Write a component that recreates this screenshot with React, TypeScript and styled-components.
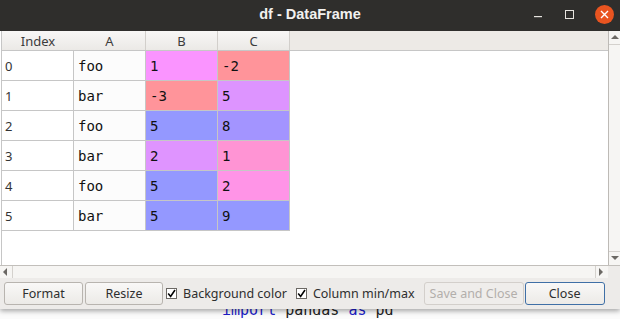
import React from "react"
import styled, { createGlobalStyle } from "styled-components"

const GlobalStyle = createGlobalStyle`
	html, body {
		margin: 0;
		padding: 0;
		width: 620px;
		height: 319px;
		overflow: hidden;
		background: #f4f4f4;
	}
`

const UI_FONT = `"Noto Sans", "Open Sans", "DejaVu Sans", sans-serif`
const MONO_FONT = `"DejaVu Sans Mono", "Liberation Mono", monospace`
const GRID = "#c6c6c6"

const SPage = styled.div`
	display: flex;
	flex-direction: column;
	width: 620px;
	height: 319px;
	overflow: hidden;
	font-family: ${UI_FONT};
`

const SWindow = styled.div`
	position: relative;
	z-index: 1;
	display: flex;
	flex-direction: column;
	height: 309px;
	background: #edebe9;
	box-shadow: 0 2px 5px rgba(0, 0, 0, 0.35);
`

const STitleBar = styled.div`
	display: grid;
	grid-template-columns: 1fr auto 1fr;
	align-items: center;
	height: 31px;
	background: #2f2e2c;
	color: #f2f1ef;
`

const STitle = styled.div`
	font-family: "Liberation Sans", Arial, sans-serif;
	font-weight: bold;
	font-size: 14.5px;
	padding-bottom: 3px;
`

const SControls = styled.div`
	display: flex;
	justify-content: flex-end;
	align-items: center;
	padding-bottom: 3px;
`

const SControl = styled.div<{ $w: number }>`
	display: flex;
	width: ${(p) => p.$w}px;
	justify-content: center;
	align-items: center;
`

const SBody = styled.div`
	display: flex;
	height: 234px;
	background: #ffffff;
`

const STable = styled.div`
	display: flex;
	flex-direction: column;
	flex: 1;
	border-left: 1px solid ${GRID};
	margin-left: 1px;
`

const SHeader = styled.div`
	display: flex;
	height: 19px;
	border-bottom: 1px solid ${GRID};
	background: #edeae6;
`

const SHeadCell = styled.div<{ $sep?: boolean }>`
	display: flex;
	width: ${(p) => (p.$sep ? 71 : 72)}px;
	align-items: center;
	justify-content: center;
	background: linear-gradient(#f8f7f6, #ebe9e6);
	border-right: ${(p) => (p.$sep ? "1px solid #d2cfcb" : "none")};
	font-size: 13px;
	color: #3c3c3c;
`

const SRow = styled.div`
	display: flex;
	height: 30px;
`

const SCell = styled.div<{ $bg?: string; $index?: boolean }>`
	display: flex;
	width: 72px;
	height: 30px;
	box-sizing: border-box;
	align-items: center;
	padding-left: ${(p) => (p.$index ? 3 : 4)}px;
	border-right: 1px solid ${GRID};
	border-bottom: 1px solid ${GRID};
	background: ${(p) => p.$bg || "#fcfcfc"};
	font-family: ${(p) => (p.$index ? UI_FONT : MONO_FONT)};
	font-size: ${(p) => (p.$index ? 13 : 14)}px;
	color: ${(p) => (p.$index ? "#333333" : "#111111")};
`

const SVScroll = styled.div`
	display: flex;
	flex-direction: column;
	justify-content: space-between;
	width: 11px;
	border-left: 1px solid #bdbab6;
	background: #f6f5f3;
`

const SArrowBox = styled.div<{ $top?: boolean }>`
	display: flex;
	height: 13px;
	align-items: center;
	justify-content: center;
	border-${(p) => (p.$top ? "bottom" : "top")}: 1px solid #d4d1cd;
`

const SHScroll = styled.div`
	display: flex;
	height: 12px;
	border-top: 1px solid #c2bfbb;
	background: #f6f5f3;
`

const SHArrow = styled.div<{ $left?: boolean }>`
	display: flex;
	width: 12px;
	align-items: center;
	justify-content: center;
	border-${(p) => (p.$left ? "right" : "left")}: 1px solid #d4d1cd;
`

const SHTrack = styled.div`
	flex: 1;
`

const SCorner = styled.div`
	width: 12px;
	background: #edebe9;
`

const SToolbar = styled.div`
	display: flex;
	align-items: center;
	height: 31px;
	padding: 0 4px;
	background: #edebe9;
`

const SButton = styled.div<{ $w: number; $ml: number; $disabled?: boolean; $default?: boolean }>`
	display: flex;
	flex-shrink: 0;
	width: ${(p) => p.$w}px;
	height: 23px;
	margin-left: ${(p) => p.$ml}px;
	box-sizing: border-box;
	align-items: center;
	justify-content: center;
	border: 1px solid ${(p) => (p.$default ? "#3f6fa6" : p.$disabled ? "#d3cfcb" : "#b8b4af")};
	border-radius: 3px;
	background: ${(p) => (p.$disabled ? "#efedeb" : "linear-gradient(#f9f8f7, #eceae7)")};
	color: ${(p) => (p.$disabled ? "#b3afab" : "#2e2e2e")};
	font-size: 12.5px;
	white-space: nowrap;
`

const SCheck = styled.label<{ $ml: number }>`
	display: flex;
	flex-shrink: 0;
	align-items: center;
	gap: 6px;
	margin-left: ${(p) => p.$ml}px;
	font-size: 12.5px;
	color: #2e2e2e;
	white-space: nowrap;
`

const SBox = styled.div`
	display: flex;
	width: 11px;
	height: 11px;
	box-sizing: border-box;
	border: 1px solid #6b6864;
	background: #ffffff;
	align-items: center;
	justify-content: center;
`

const SCodeStrip = styled.div`
	height: 10px;
	overflow: hidden;
	background: #fbfbfb;
`

const SCodeLine = styled.div`
	margin-top: -8px;
	padding-left: 222px;
	font-family: ${MONO_FONT};
	font-size: 15px;
	line-height: 18px;
	white-space: pre;
	color: #222222;
`

const SKeyword = styled.span`
	color: #1c1cc8;
`

type Row = { idx: string; a: string; b: [string, string]; c: [string, string] }

const rows: Row[] = [
	{ idx: "0", a: "foo", b: ["1", "#fa94ff"], c: ["-2", "#ff949a"] },
	{ idx: "1", a: "bar", b: ["-3", "#ff949a"], c: ["5", "#dd94ff"] },
	{ idx: "2", a: "foo", b: ["5", "#9498ff"], c: ["8", "#a394ff"] },
	{ idx: "3", a: "bar", b: ["2", "#df94ff"], c: ["1", "#ff94d4"] },
	{ idx: "4", a: "foo", b: ["5", "#9498ff"], c: ["2", "#ff94e7"] },
	{ idx: "5", a: "bar", b: ["5", "#9498ff"], c: ["9", "#9498ff"] },
]

const CheckMark = () => (
	<svg width="9" height="9" viewBox="0 0 9 9">
		<path d="M1.2 4.6 L3.6 7.4 L8 1" fill="none" stroke="#000" strokeWidth="1.6" />
	</svg>
)

const Tri = ({ dir }: { dir: "up" | "down" | "left" | "right" }) => {
	const pts = {
		up: "0,5 4,1 8,5",
		down: "0,1 8,1 4,5",
		left: "5,0 5,8 1,4",
		right: "1,0 1,8 5,4",
	}[dir]
	return (
		<svg width="8" height="8" viewBox="0 0 8 8">
			<polygon points={pts} fill="#6b6864" />
		</svg>
	)
}

export default function App() {
	return (
		<SPage>
			<GlobalStyle />
			<SWindow>
				<STitleBar>
					<div />
					<STitle>df - DataFrame</STitle>
					<SControls>
						<SControl $w={22}>
							<svg width="8" height="8" viewBox="0 0 8 8">
								<rect x="0" y="6" width="8" height="1.2" fill="#e6e3de" />
							</svg>
						</SControl>
						<SControl $w={40}>
							<svg width="9" height="9" viewBox="0 0 9 9">
								<rect x="0.5" y="0.5" width="8" height="8" fill="none" stroke="#e6e3de" />
							</svg>
						</SControl>
						<SControl $w={31}>
							<svg width="19" height="19" viewBox="0 0 19 19">
								<circle cx="9.5" cy="9.5" r="9.5" fill="#e95420" />
								<path d="M6 6 L13 13 M13 6 L6 13" stroke="#fff" strokeWidth="1.4" />
							</svg>
						</SControl>
					</SControls>
				</STitleBar>
				<SBody>
					<STable>
						<SHeader>
							<SHeadCell>Index</SHeadCell>
							<SHeadCell $sep>A</SHeadCell>
							<SHeadCell $sep>B</SHeadCell>
							<SHeadCell $sep>C</SHeadCell>
						</SHeader>
						{rows.map((r) => (
							<SRow key={r.idx}>
								<SCell $index $bg="#ffffff">
									{r.idx}
								</SCell>
								<SCell>{r.a}</SCell>
								<SCell $bg={r.b[1]}>{r.b[0]}</SCell>
								<SCell $bg={r.c[1]}>{r.c[0]}</SCell>
							</SRow>
						))}
					</STable>
					<SVScroll>
						<SArrowBox $top>
							<Tri dir="up" />
						</SArrowBox>
						<SArrowBox>
							<Tri dir="down" />
						</SArrowBox>
					</SVScroll>
				</SBody>
				<SHScroll>
					<SHArrow $left>
						<Tri dir="left" />
					</SHArrow>
					<SHTrack />
					<SHArrow>
						<Tri dir="right" />
					</SHArrow>
					<SCorner />
				</SHScroll>
				<SToolbar>
					<SButton $w={79} $ml={0}>
						Format
					</SButton>
					<SButton $w={78} $ml={2}>
						Resize
					</SButton>
					<SCheck $ml={3}>
						<SBox>
							<CheckMark />
						</SBox>
						Background color
					</SCheck>
					<SCheck $ml={9}>
						<SBox>
							<CheckMark />
						</SBox>
						Column min/max
					</SCheck>
					<SButton $w={100} $ml={9} $disabled>
						Save and Close
					</SButton>
					<SButton $w={80} $ml={1} $default>
						Close
					</SButton>
				</SToolbar>
			</SWindow>
			<SCodeStrip>
				<SCodeLine>
					<SKeyword>import</SKeyword> pandas <SKeyword>as</SKeyword> pd
				</SCodeLine>
			</SCodeStrip>
		</SPage>
	)
}
